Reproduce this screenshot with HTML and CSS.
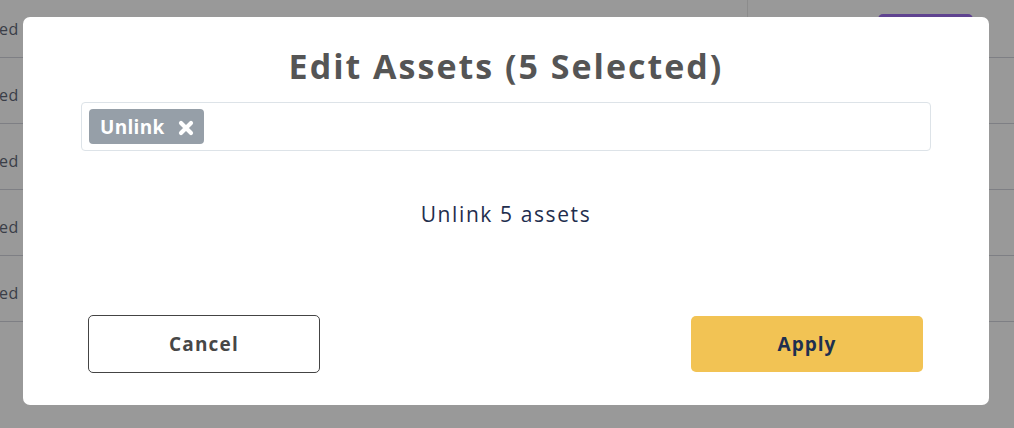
FILE: index.html
```html
<!DOCTYPE html>
<html>
<head>
    <title>Edit Assets</title>
    <link rel="stylesheet" href="styles.css">
</head>
<body>
    <div class="table">
        <div class="row"><span class="cell">ed</span><span class="col-line"></span><span class="purple-btn"></span></div>
        <div class="row"><span class="cell">ed</span></div>
        <div class="row"><span class="cell">ed</span></div>
        <div class="row"><span class="cell">ed</span></div>
        <div class="row"><span class="cell">ed</span></div>
    </div>

    <div class="overlay">
        <div class="modal">
            <h1>Edit Assets (5 Selected)</h1>

            <div class="tag-input">
                <span class="tag">
                    Unlink
                    <svg class="tag-x" width="16" height="16" viewBox="0 0 16 16">
                        <path d="M3 3 L13 13 M13 3 L3 13" stroke="#fff" stroke-width="4.2" stroke-linecap="round"/>
                    </svg>
                </span>
            </div>

            <p class="message">Unlink 5 assets</p>

            <div class="actions">
                <button class="btn-cancel">Cancel</button>
                <button class="btn-apply">Apply</button>
            </div>
        </div>
    </div>
</body>
</html>
```

FILE: styles.css
```css
body {
    margin: 0;
    height: 428px;
    overflow: hidden;
    background: #999999;
    font-family: "Open Sans", "Noto Sans", sans-serif;
}
.table {
    margin-top: -8px;
}
.row {
    position: relative;
    height: 65px;
    border-bottom: 1px solid #7e7f84;
    display: flex;
    align-items: center;
}
.cell {
    font-size: 16px;
    letter-spacing: 0.5px;
    color: #3a3e48;
    padding-top: 8px;
    margin-left: -1px;
}
.col-line {
    position: absolute;
    left: 747px;
    top: 0;
    bottom: 0;
    border-left: 1px solid #8c8c8c;
}
.purple-btn {
    position: absolute;
    left: 878px;
    top: 22px;
    width: 95px;
    height: 30px;
    background: #5f4390;
    border-radius: 5px;
}
.overlay {
    position: fixed;
    inset: 0;
    display: flex;
    justify-content: center;
    align-items: flex-start;
    padding-top: 17px;
    padding-right: 2px;
}
.modal {
    width: 966px;
    height: 388px;
    box-sizing: border-box;
    background: white;
    border-radius: 7px;
    padding: 27px 58px 0;
    display: flex;
    flex-direction: column;
}
h1 {
    margin: 0;
    height: 44px;
    line-height: 44px;
    text-align: center;
    font-size: 34px;
    letter-spacing: 2px;
    font-weight: 700;
    color: #555555;
}
.tag-input {
    margin-top: 14px;
    height: 49px;
    box-sizing: border-box;
    border: 1px solid #dde3e8;
    border-radius: 4px;
    padding: 6px 7px;
}
.tag {
    display: inline-flex;
    align-items: center;
    gap: 13px;
    height: 35px;
    box-sizing: border-box;
    padding: 0 10px 0 11px;
    background: #969fa8;
    border-radius: 4px;
    color: white;
    font-size: 19px;
    letter-spacing: 0.3px;
    font-weight: 700;
}
.tag-x {
    margin-top: 2px;
}
.message {
    margin: 49px 0 0;
    height: 28px;
    line-height: 28px;
    text-align: center;
    font-size: 21px;
    letter-spacing: 1.6px;
    color: #1f2e4e;
}
.actions {
    margin-top: 87px;
    padding: 0 8px 0 7px;
    display: flex;
    justify-content: space-between;
    align-items: center;
}
button {
    width: 232px;
    font-family: inherit;
    font-size: 19px;
    font-weight: 700;
    border-radius: 5px;
    cursor: pointer;
}
.btn-cancel {
    height: 58px;
    background: white;
    border: 1px solid #444444;
    color: #474747;
    letter-spacing: 1.2px;
}
.btn-apply {
    height: 56px;
    background: #f2c354;
    border: none;
    color: #1e2f4f;
    letter-spacing: 1px;
}
```
